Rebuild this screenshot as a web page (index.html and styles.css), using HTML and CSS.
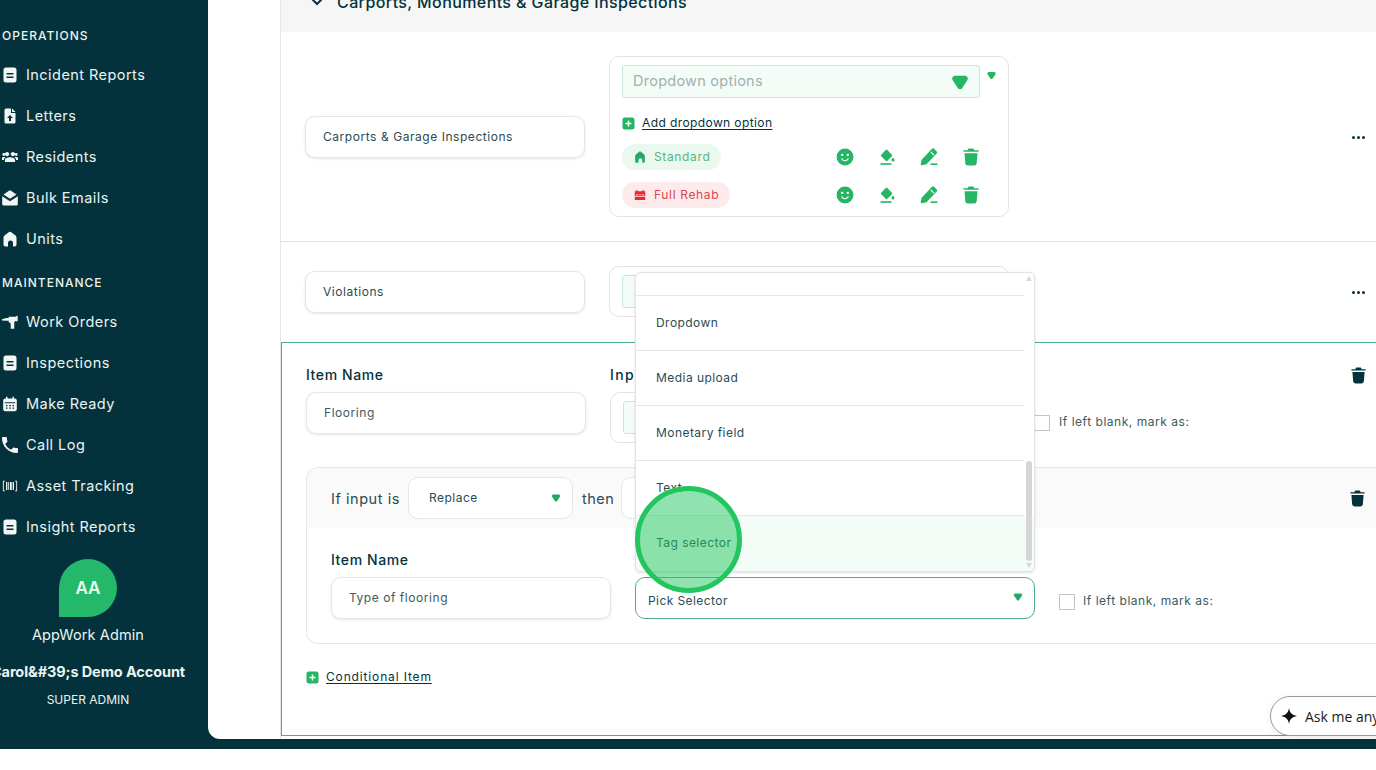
FILE: index.html
```html
<!DOCTYPE html>
<html lang="en">
<head>
<meta charset="utf-8">
<title>Inspection items</title>
<link rel="stylesheet" href="styles.css">
</head>
<body>
<svg class="sprite" aria-hidden="true">
  <symbol id="i-doc" viewBox="0 0 16 16"><path fill-rule="evenodd" d="M4 .5h8a2.500 2.500 0 0 1 2.500 2.500v10a2.500 2.500 0 0 1-2.500 2.500H4A2.500 2.500 0 0 1 1.500 13V3A2.500 2.500 0 0 1 4 .5zm.5 5.500v1.500h7V6zm0 3.500V11h7V9.500z"/></symbol>
  <symbol id="i-up" viewBox="0 0 16 16"><path fill-rule="evenodd" d="M4 0.500h5v4.500h4.500v9a1.500 1.500 0 0 1-1.500 1.500H4A1.500 1.500 0 0 1 2.500 14V2A1.500 1.500 0 0 1 4 .5zM8 7l-3 3h2v3h2v-3h2z"/><path d="M10 .5l3.500 3.500H10z"/></symbol>
  <symbol id="i-group" viewBox="1 3 22 18"><path d="M16 11c1.660 0 3-1.340 3-3s-1.340-3-3-3-3 1.340-3 3 1.340 3 3 3zm-8 0c1.660 0 3-1.340 3-3S9.660 5 8 5 5 6.340 5 8s1.340 3 3 3zM3.500 10.500a2 2 0 1 0 0-4 2 2 0 0 0 0 4zm17 0a2 2 0 1 0 0-4 2 2 0 0 0 0 4zM12 12.500c-2.300 0-7 1.200-7 3.500v3h14v-3c0-2.300-4.700-3.500-7-3.500zM3.500 12C1.800 12 0 12.900 0 14.500V16h3.500c.2-1.500 1.200-2.700 2.700-3.500-.8-.3-1.800-.5-2.700-.5zm17 0c-.9 0-1.900.2-2.700.5 1.500.8 2.500 2 2.700 3.500H24v-1.500c0-1.600-1.800-2.500-3.500-2.500z"/></symbol>
  <symbol id="i-mail" viewBox="0 0 16 16"><path d="M8 .5c.4 0 .7.100 1 .3l5.500 3.700L8 8.800 1.500 4.500 7 .8c.3-.2.600-.3 1-.3z"/><path d="M.2 6.300 8 11.300l7.800-5V14a1.500 1.500 0 0 1-1.500 1.500H1.700A1.500 1.500 0 0 1 .2 14z"/></symbol>
  <symbol id="i-home" viewBox="0 0 16 16"><path d="M8 .8c.6 0 1.200.2 1.600.6l3.600 2.900c.9.700 1.300 1.700 1.300 2.800V13.500a2 2 0 0 1-2 2h-1.500V12a2.500 2.500 0 0 0-5 0v3.500H3.500a2 2 0 0 1-2-2V7.100c0-1.100.4-2.100 1.300-2.800l3.600-2.900c.4-.4 1-.6 1.600-.6z"/></symbol>
  <symbol id="i-tool" viewBox="0 0 18 16"><path d="M0 5 5 3.500h2.500V2h7.500l2.600-1.300v6.800L15 6.800l-1.200 1.400V15.500h-4V9.800L7.500 8V6.500H5L0 6.400z"/></symbol>
  <symbol id="i-cal" viewBox="0 0 16 16"><path fill-rule="evenodd" d="M4 .8h1.500v1.700h5V.8H12v1.700h.8a2 2 0 0 1 2 2v8.700a2 2 0 0 1-2 2H3.200a2 2 0 0 1-2-2V4.500a2 2 0 0 1 2-2H4zM2.800 6.300v1h10.400v-1zM4 9v1.300h1.500V9zm3.200 0v1.300h1.600V9zm3.300 0v1.300H12V9zM4 11.500v1.300h1.500v-1.300zm3.200 0v1.300h1.600v-1.300zm3.300 0v1.300H12v-1.300z"/></symbol>
  <symbol id="i-phone" viewBox="3 3 18 18"><path d="M6.620 10.790c1.440 2.830 3.760 5.140 6.590 6.590l2.200-2.200c.27-.27.670-.36 1.020-.24 1.120.37 2.330.57 3.570.57.550 0 1 .45 1 1V20c0 .55-.45 1-1 1C10.610 21 3 13.390 3 4c0-.55.45-1 1-1h3.500c.55 0 1 .45 1 1 0 1.250.2 2.450.57 3.570.11.350.03.740-.25 1.020l-2.200 2.200z"/></symbol>
  <symbol id="i-bar" viewBox="0 0 18 16"><path d="M1 2h2.500v1H2v10h1.500v1H1zm16 0h-2.500v1H16v10h-1.500v1H17zM4.500 3.500H6v9H4.500zm2.500 0h1v9H7zm2 0h2v9H9zm3 0h1.500v9H12z"/></symbol>
  <symbol id="i-smile" viewBox="0 0 16 16"><path fill-rule="evenodd" d="M8 .5a7.500 7.500 0 1 1 0 15 7.500 7.500 0 0 1 0-15zM5.500 5a1.100 1.100 0 1 0 0 2.200 1.100 1.100 0 0 0 0-2.200zm5 0a1.100 1.100 0 1 0 0 2.200 1.100 1.100 0 0 0 0-2.200zM4.600 9.300c.5 1.500 1.900 2.500 3.400 2.500s2.900-1 3.400-2.500l-1-.3C10 10 9.100 10.700 8 10.700S6 10 5.600 9z"/></symbol>
  <symbol id="i-fill" viewBox="0 0 16 18"><path d="M7 1.800c.3-.3.800-.3 1.100 0l5 5.200c.3.300.3.800 0 1.100l-5 5c-.3.300-.8.300-1.100 0l-5-5c-.3-.3-.3-.8 0-1.100z"/><path d="M14 9.500s1.500 1.500 1.500 2.600a1.500 1.500 0 0 1-3 0c0-1.100 1.500-2.600 1.500-2.600z"/><path d="M1.500 15.200h11v1.600h-11z"/></symbol>
  <symbol id="i-pen" viewBox="0 0 18 18"><path fill-rule="evenodd" d="M12 .8a1.500 1.500 0 0 1 2.100 0l2.600 2.600a1.500 1.500 0 0 1 0 2.100L6.800 15.900c-.4.400-.9.600-1.500.7l-3.300.6a1 1 0 0 1-1.200-1.200l.6-3.300c.1-.6.300-1.100.7-1.500zm-.7 2.800-.8.800 3.100 3.100.8-.8z"/><path d="M10.500 15.400h7V17h-7z"/></symbol>
  <symbol id="i-trash" viewBox="0 0 16 18"><path d="M6 .5h4c.5 0 .9.300 1 .8l.2.900H15.500v1.500H.5V2.200h4.300L5 1.300c.1-.5.500-.8 1-.8z"/><path d="M1.500 5.300h13l-.8 9.900a2.500 2.500 0 0 1-2.500 2.300H4.800a2.500 2.500 0 0 1-2.500-2.300z"/></symbol>
  <symbol id="i-plus" viewBox="0 0 14 14"><path fill-rule="evenodd" d="M3 .5h8A2.500 2.500 0 0 1 13.500 3v8a2.500 2.500 0 0 1-2.500 2.500H3A2.500 2.500 0 0 1 .5 11V3A2.500 2.500 0 0 1 3 .5zM6.200 3.800v2.400H3.800v1.600h2.400v2.400h1.600V7.800h2.400V6.200H7.800V3.800z"/></symbol>
  <symbol id="i-tri" viewBox="0 0 16 14"><path d="M3.500 .8h9c2.300 0 3.500 2.300 2.300 4.200L9.900 12.300c-.9 1.300-2.900 1.300-3.800 0L1.200 5C0 3.100 1.200.8 3.500.8z"/></symbol>
  <symbol id="i-gift" viewBox="0 0 16 16"><path fill-rule="evenodd" d="M3 1.500h2V3h6V1.500h2V3h2v11.500H1V3h2zM3 7v1.500h2V7zm4 0v1.500h2V7zm4 0v1.500h2V7zM1 9.800v1h14v-1z"/></symbol>
  <symbol id="i-spark" viewBox="0 0 16 16"><path d="M8 0c.6 4.600 2.800 7 8 8-5.200 1-7.400 3.400-8 8-.6-4.600-2.800-7-8-8 5.200-1 7.400-3.400 8-8z"/></symbol>
</svg>

<div class="shell">
  <aside class="sidebar">
    <h2 class="nav-title">OPERATIONS</h2>
    <a class="nav-item"><svg class="nav-icon"><use href="#i-doc"/></svg>Incident Reports</a>
    <a class="nav-item"><svg class="nav-icon"><use href="#i-up"/></svg>Letters</a>
    <a class="nav-item"><svg class="nav-icon"><use href="#i-group"/></svg>Residents</a>
    <a class="nav-item"><svg class="nav-icon"><use href="#i-mail"/></svg>Bulk Emails</a>
    <a class="nav-item"><svg class="nav-icon"><use href="#i-home"/></svg>Units</a>
    <h2 class="nav-title nav-title-gap">MAINTENANCE</h2>
    <a class="nav-item"><svg class="nav-icon"><use href="#i-tool"/></svg>Work Orders</a>
    <a class="nav-item"><svg class="nav-icon"><use href="#i-doc"/></svg>Inspections</a>
    <a class="nav-item"><svg class="nav-icon"><use href="#i-cal"/></svg>Make Ready</a>
    <a class="nav-item"><svg class="nav-icon"><use href="#i-phone"/></svg>Call Log</a>
    <a class="nav-item"><svg class="nav-icon"><use href="#i-bar"/></svg>Asset Tracking</a>
    <a class="nav-item"><svg class="nav-icon"><use href="#i-doc"/></svg>Insight Reports</a>
    <div class="profile">
      <div class="avatar">AA</div>
      <div class="profile-name">AppWork Admin</div>
      <div class="profile-account">Carol&amp;#39;s Demo Account</div>
      <div class="profile-role">SUPER ADMIN</div>
    </div>
  </aside>

  <main class="main">
    <div class="panel">
      <header class="section-head">
        <svg class="chevron" viewBox="0 0 14 9"><path d="M1 1l6 6 6-6" fill="none" stroke="currentColor" stroke-width="2"/></svg>
        <span>Carports, Monuments &amp; Garage Inspections</span>
      </header>

      <section class="row row-first">
        <div class="input">Carports &amp; Garage Inspections</div>
        <div class="card">
          <div class="field-line">
            <div class="field"><span class="field-text">Dropdown options</span><svg class="tri-big"><use href="#i-tri"/></svg></div>
            <svg class="tri-small"><use href="#i-tri"/></svg>
          </div>
          <a class="add-link add-option"><svg class="plus"><use href="#i-plus"/></svg><span>Add dropdown option</span></a>
          <div class="tag-row">
            <span class="tag tag-green"><svg class="tag-icon"><use href="#i-home"/></svg>Standard</span>
            <svg class="act"><use href="#i-smile"/></svg><svg class="act"><use href="#i-fill"/></svg><svg class="act"><use href="#i-pen"/></svg><svg class="act"><use href="#i-trash"/></svg>
          </div>
          <div class="tag-row tag-row-2">
            <span class="tag tag-red"><svg class="tag-icon"><use href="#i-gift"/></svg>Full Rehab</span>
            <svg class="act"><use href="#i-smile"/></svg><svg class="act"><use href="#i-fill"/></svg><svg class="act"><use href="#i-pen"/></svg><svg class="act"><use href="#i-trash"/></svg>
          </div>
        </div>
        <div class="dots"><i></i><i></i><i></i></div>
      </section>

      <section class="row row-second">
        <div class="input">Violations</div>
        <div class="card card-short"><div class="field field-stub"></div></div>
        <div class="dots"><i></i><i></i><i></i></div>
      </section>

      <section class="editor">
        <div class="editor-top">
          <div class="col-name">
            <label class="label">Item Name</label>
            <div class="input input-muted">Flooring</div>
          </div>
          <div class="col-type">
            <label class="label label-type">Input Type</label>
            <div class="card card-short"><div class="field field-stub"></div></div>
          </div>
          <label class="blank blank-top"><span class="check"></span><span class="blank-text">If left blank, mark as:</span></label>
          <svg class="trash-dark trash-top"><use href="#i-trash"/></svg>
        </div>

        <div class="cond">
          <div class="cond-head">
            <span class="cond-text">If input is</span>
            <div class="select select-small"><span class="select-text">Replace</span><svg class="tri"><use href="#i-tri"/></svg></div>
            <span class="cond-text cond-then">then</span>
            <div class="select select-wide"></div>
            <svg class="trash-dark trash-cond"><use href="#i-trash"/></svg>
          </div>
          <div class="cond-body">
            <div class="col-name">
              <label class="label">Item Name</label>
              <div class="input input-muted input-sub">Type of flooring</div>
            </div>
            <div class="col-pick">
              <div class="select select-active">Pick Selector<svg class="tri"><use href="#i-tri"/></svg></div>
            </div>
            <label class="blank blank-sub"><span class="check"></span><span class="blank-text">If left blank, mark as:</span></label>
          </div>
        </div>

        <a class="add-link add-cond"><svg class="plus"><use href="#i-plus"/></svg><span>Conditional Item</span></a>
      </section>
    </div>

    <button class="ask"><svg class="spark"><use href="#i-spark"/></svg>Ask me anything</button>
  </main>

  <div class="menu">
    <div class="menu-item menu-stub"></div>
    <div class="menu-item">Dropdown</div>
    <div class="menu-item">Media upload</div>
    <div class="menu-item">Monetary field</div>
    <div class="menu-item">Text</div>
    <div class="menu-item menu-hover">Tag selector</div>
    <div class="scroll"><i class="arrow-up"></i><b class="thumb"></b><i class="arrow-down"></i></div>
  </div>
  <div class="click-mark"></div>
</div>
</body>
</html>
```
FILE: styles.css
```css
* { box-sizing: border-box; }
html, body { margin: 0; height: 770px; overflow: hidden; background: #fff; }
body { font-family: Inter, "Noto Sans", sans-serif; color: #04323c; }
.sprite { width: 0; height: 0; position: absolute; }

.shell { position: relative; display: flex; height: 749px; background: #04323c; }

/* sidebar */
.sidebar { width: 208px; flex: none; padding: 28px 0 0 2px; color: #eaf4f1; display: flex; flex-direction: column; }
.nav-title { margin: 0; font-size: 12px; line-height: 15px; font-weight: 500; letter-spacing: 1px; }
.nav-title-gap { margin-top: 16px; }
.nav-item { display: flex; align-items: center; height: 41px; gap: 8px; font-size: 14.500px; letter-spacing: .45px; }
.nav-title + .nav-item { margin-top: 11px; }
.nav-icon { width: 16px; height: 16px; fill: #f2f7f6; flex: none; }
.profile { width: 172px; margin-top: 12px; display: flex; flex-direction: column; align-items: center; white-space: nowrap; }
.avatar { width: 58px; height: 58px; border-radius: 50% 50% 50% 0; background: #24b86a; color: #eafff3; font-weight: 600; font-size: 17px; display: flex; align-items: center; justify-content: center; }
.profile-name { margin-top: 9px; font-size: 14.500px; line-height: 18px; letter-spacing: .1px; }
.profile-account { margin-top: 19px; font-size: 14.500px; line-height: 18px; font-weight: 700; letter-spacing: -.1px; }
.profile-role { margin-top: 11px; font-size: 12px; line-height: 15px; }

/* main */
.main { position: relative; flex: 1; min-width: 0; height: 739px; background: #fff; border-bottom-left-radius: 12px; overflow: hidden; padding-left: 72px; }
.panel { border-left: 1px solid #e6e6e6; height: 100%; }
.section-head { height: 32px; background: #f6f6f6; display: flex; align-items: flex-end; padding: 0 0 20px 29px; gap: 13px; font-size: 16px; font-weight: 500; line-height: 20px; letter-spacing: .4px; color: #04323c; }
.chevron { width: 14px; height: 9px; margin-bottom: 6px; flex: none; }

/* rows */
.row { display: flex; align-items: center; gap: 24px; padding-left: 24px; border-bottom: 1px solid #e3e3e3; }
.row-first { height: 210px; }
.row-second { height: 100px; border-bottom: none; padding-bottom: 1px; }
.input { width: 280px; height: 42px; flex: none; border: 1px solid #e6e6e6; border-radius: 10px; box-shadow: 0 1px 3px rgba(0,0,0,.1); padding: 0 17px; display: flex; align-items: center; font-size: 12px; letter-spacing: .55px; color: #2a4b53; background: #fff; }
.card { width: 400px; flex: none; border: 1px solid #e3e3e3; border-radius: 10px; padding: 8px 12px; background: #fff; }
.card-short { height: 51px; }
.field-line { display: flex; align-items: flex-start; gap: 7px; }
.field { width: 358px; height: 33px; flex: none; display: flex; align-items: center; justify-content: space-between; padding: 0 10px; border: 1px solid #c8e8d6; border-radius: 3px; background: #f3fcf7; color: #a4afae; font-size: 14.500px; letter-spacing: .25px; }
.field-text { margin-bottom: 2px; }
.field-stub { width: 100px; }
.tri-big { width: 18px; height: 15px; fill: #25b565; margin-top: 1px; }
.tri-small { width: 10px; height: 9px; fill: #25b565; margin-top: 6px; }
.tri { width: 10px; height: 8px; fill: #25a766; }
.add-link { display: flex; align-items: center; gap: 7px; font-size: 12px; line-height: 16px; letter-spacing: .4px; color: #04323c; }
.add-link span { text-decoration: underline; text-underline-offset: 2px; }
.plus { width: 13px; height: 13px; fill: #25b565; flex: none; }
.add-option { margin-top: 17px; }
.tag-row { display: flex; align-items: center; gap: 24px; margin-top: 13px; height: 26px; }
.tag-row-2 { margin-top: 12px; }
.tag { display: flex; align-items: center; gap: 8px; height: 26px; border-radius: 13px; padding: 0 12px 1px; font-size: 12px; letter-spacing: .65px; white-space: nowrap; }
.tag-green { background: #eaf8f0; color: #55b681; margin-right: 91px; width: 99px; }
.tag-red { background: #fdeaea; color: #d8474f; margin-right: 82px; width: 108px; }
.tag-icon { width: 12px; height: 12px; fill: currentColor; flex: none; }
.tag-green .tag-icon { fill: #25a766; }
.tag-red .tag-icon { fill: #ee2a3a; }
.act { width: 18px; height: 18px; fill: #25b565; flex: none; }
.dots { margin-left: auto; margin-right: 11px; margin-top: 1px; display: flex; gap: 2px; }
.dots i { width: 3px; height: 3px; border-radius: 50%; background: #04323c; }

/* editor */
.editor { border: 1px solid #4fae80; border-right: none; padding: 24px 0 50px 24px; }
.editor-top { display: flex; align-items: flex-start; gap: 24px; }
.label { display: block; font-size: 14px; line-height: 16px; font-weight: 500; letter-spacing: .6px; margin-bottom: 9px; color: #04323c; white-space: nowrap; }
.label-type { letter-spacing: 1.4px; }
.col-name { width: 280px; flex: none; }
.col-type { width: 400px; flex: none; }
.input-muted { color: #3c5a60; padding-bottom: 2px; }
.blank { display: flex; align-items: center; gap: 9px; font-size: 12px; letter-spacing: .53px; color: #3c5a60; white-space: nowrap; }
.blank-text { margin-bottom: 2px; }
.check { width: 16px; height: 16px; border: 1px solid #c4c4c4; background: #fff; flex: none; }
.blank-top { margin-top: 47px; }
.trash-dark { width: 15px; height: 17px; fill: #04323c; flex: none; }
.trash-top { margin-left: auto; margin-right: 10px; }
.cond { margin-top: 24px; border: 1px solid #e6e6e6; border-right: none; border-radius: 12px 0 0 12px; }
.cond-head { display: flex; align-items: center; height: 60px; padding-left: 24px; gap: 8px; background: #fafafa; border-radius: 12px 0 0 0; }
.cond-text { font-size: 14.500px; letter-spacing: .55px; color: #2a4b53; }
.cond-then { margin-left: 1px; margin-right: -1px; }
.select { height: 42px; border: 1px solid #e6e6e6; border-radius: 10px; background: #fff; display: flex; align-items: center; justify-content: space-between; font-size: 12px; letter-spacing: .5px; color: #2a4b53; flex: none; }
.select-small { width: 165px; padding: 0 11px 0 20px; }
.select-text { margin-bottom: 1px; }
.select-wide { width: 400px; }
.trash-cond { margin-left: auto; margin-right: 11px; }
.cond-body { display: flex; align-items: flex-start; gap: 24px; padding: 24px 0 24px 24px; }
.col-pick { width: 400px; flex: none; padding-top: 25px; }
.select-active { width: 400px; border-color: #4fae80; padding: 4px 11px 0 12px; letter-spacing: .42px; }
.select-active .tri { margin-top: -6px; }
.blank-sub { margin-top: 41px; gap: 8px; }
.add-cond { margin-top: 25px; }
.add-cond span { letter-spacing: .85px; }

/* ask */
.ask { position: absolute; left: 1062px; top: 696px; width: 180px; height: 40px; display: flex; align-items: center; gap: 8px; padding: 0 0 0 10px; border: 1px solid #9a9a9a; border-radius: 20px; background: #fff; color: #1a1a1a; font-family: "Open Sans", sans-serif; font-size: 14px; box-shadow: 0 2px 8px rgba(0,0,0,.08); white-space: nowrap; }
.spark { width: 16px; height: 16px; fill: #111; flex: none; }

/* menu */
.menu { position: absolute; left: 635px; top: 272px; width: 400px; height: 300px; background: #fff; border: 1px solid #e3e3e3; border-radius: 6px; box-shadow: 0 1px 3px rgba(0,0,0,.12); overflow: hidden; }
.menu-item { width: 388px; height: 55px; display: flex; align-items: center; padding: 0 0 2px 20px; border-bottom: 1px solid #e6e6e6; font-size: 12px; letter-spacing: .45px; color: #2a4b53; }
.menu-stub { height: 23px; }
.menu-hover { width: 398px; background: #f3fcf7; border-bottom: none; }
.scroll { position: absolute; right: 1px; top: 0; bottom: 0; width: 8px; }
.thumb { position: absolute; left: 1px; top: 188px; width: 6px; height: 100px; border-radius: 3px; background: #d6d6d6; }
.arrow-up, .arrow-down { position: absolute; left: 1px; width: 0; height: 0; border-left: 3px solid transparent; border-right: 3px solid transparent; }
.arrow-up { top: 3px; border-bottom: 5px solid #d8d8d8; }
.arrow-down { bottom: 3px; border-top: 5px solid #d8d8d8; }

.click-mark { position: absolute; left: 635px; top: 486px; width: 107px; height: 107px; border-radius: 50%; border: 5px solid #22c55e; background: rgba(34,197,94,.5); }
```
